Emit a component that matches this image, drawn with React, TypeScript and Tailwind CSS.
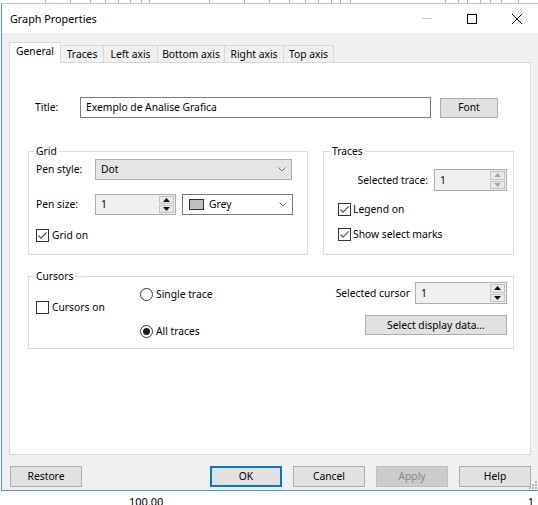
import type { ReactNode } from "react";

const ticks = [45, 70, 90, 105, 118, 130, 141, 149, 209, 244, 269, 289, 305, 318, 331, 340, 350, 445, 458, 467, 480, 490, 501, 518];

const tabs = [
  { label: "General", w: "w-[52px]" },
  { label: "Traces", w: "w-[43px]" },
  { label: "Left axis", w: "w-[54px]" },
  { label: "Bottom axis", w: "w-[67px]" },
  { label: "Right axis", w: "w-[59px]" },
  { label: "Top axis", w: "w-[50px]" },
];

function CheckBox({ checked }: { checked: boolean }) {
  return (
    <span className="flex h-[13px] w-[13px] shrink-0 items-center justify-center border border-[#333333] bg-white">
      {checked ? (
        <svg width="11" height="11" viewBox="0 0 11 11">
          <path d="M1.5 5.5 L4 8.2 L9.6 2.4" fill="none" stroke="#555555" strokeWidth="1.2" />
        </svg>
      ) : null}
    </span>
  );
}

function Radio({ on }: { on: boolean }) {
  return (
    <span className="flex h-[13px] w-[13px] shrink-0 items-center justify-center rounded-full border border-[#333333] bg-white">
      {on ? <span className="h-[7px] w-[7px] rounded-full bg-[#1a1a1a]" /> : null}
    </span>
  );
}

function Chevron() {
  return (
    <svg width="8" height="5" viewBox="0 0 8 5" className="shrink-0">
      <path d="M0.5 0.5 L4 4 L7.5 0.5" fill="none" stroke="#707070" strokeWidth="1" />
    </svg>
  );
}

function Arrow({ up, color }: { up: boolean; color: string }) {
  return (
    <svg width="7" height="4" viewBox="0 0 7 4">
      <polygon points={up ? "0,4 3.5,0 7,4" : "0,0 3.5,4 7,0"} fill={color} />
    </svg>
  );
}

function Spin({ className, dim }: { className: string; dim?: boolean }) {
  const color = dim ? "#a6a6a6" : "#111111";
  return (
    <div className={`flex border border-[#adadad] bg-[#f0f0f0] ${className}`}>
      <span className="flex flex-1 items-center pl-[5px]">1</span>
      <div className="flex w-[17px] flex-col gap-px p-px">
        <span className="flex flex-1 items-center justify-center border border-[#c2c2c2] bg-[#e9e9e9]">
          <Arrow up color={color} />
        </span>
        <span className="flex flex-1 items-center justify-center border border-[#c2c2c2] bg-[#e9e9e9]">
          <Arrow up={false} color={color} />
        </span>
      </div>
    </div>
  );
}

function Button({ children, className }: { children: ReactNode; className: string }) {
  return (
    <div className={`flex items-center justify-center border ${className}`}>{children}</div>
  );
}

export default function App() {
  return (
    <div className="h-[505px] w-[538px] overflow-hidden bg-white font-['Noto_Sans',sans-serif] text-[10.3px] leading-[13px] text-black">
      <svg width="538" height="3" className="block">
        {ticks.map((x) => (
          <line key={x} x1={x + 0.5} y1="0" x2={x + 0.5} y2="3" stroke="#b4b4b4" />
        ))}
      </svg>

      <div className="relative ml-px flex h-[488px] flex-col border-t border-b border-l border-t-[#a9c8ea] border-b-[#4f94d4] border-l-[#4f94d4]">
        <div className="flex h-[29px] shrink-0 items-center bg-white pl-[8px] pr-[16px]">
          <span className="text-[10.8px]">Graph Properties</span>
          <div className="ml-auto flex items-center gap-[35px]">
            <span className="h-px w-[10px] bg-[#c8c8c8]" />
            <span className="h-[10px] w-[10px] border border-black" />
            <svg width="10" height="10" viewBox="0 0 10 10">
              <path d="M0 0 L10 10 M10 0 L0 10" stroke="#000" strokeWidth="1" />
            </svg>
          </div>
        </div>

        <div className="flex flex-1 flex-col bg-[#f0f0f0] px-[7px] pt-[9px]">
          <div className="relative z-10 flex h-[20px] items-end">
            {tabs.map((t, i) =>
              i === 0 ? (
                <div
                  key={t.label}
                  className={`-mb-px flex h-[21px] items-start justify-center border border-b-0 border-[#d9d9d9] bg-white pt-[2px] ${t.w}`}
                >
                  {t.label}
                </div>
              ) : (
                <div
                  key={t.label}
                  className={`flex h-[17px] items-center justify-center border-t border-r border-[#d9d9d9] bg-[#f0f0f0] ${t.w}`}
                >
                  {t.label}
                </div>
              )
            )}
          </div>

          <div className="h-[393px] border border-[#d9d9d9] bg-white">
            <div className="mt-[34px] flex h-[21px] items-center">
              <span className="ml-[25px] w-[45px]">Title:</span>
              <div className="flex h-[21px] w-[351px] items-center border border-[#7a7a7a] px-[5px]">
                Exemplo de Analise Grafica
              </div>
              <Button className="ml-[9px] h-[20px] w-[58px] border-[#adadad] bg-[#e1e1e1]">Font</Button>
            </div>

            <div className="mt-[26px] flex gap-[15px] pl-[18px]">
              <fieldset className="m-0 h-[111px] w-[280px] min-w-0 border border-[#dcdcdc] p-0">
                <legend className="ml-[5px] px-[2px] leading-[14px]">Grid</legend>
                <div className="pl-[7px] pt-px">
                  <div className="flex h-[21px] items-center">
                    <span className="w-[59px]">Pen style:</span>
                    <div className="flex h-[21px] w-[197px] items-center border border-[#adadad] bg-[#e5e5e5] pl-[5px] pr-[5px]">
                      <span className="flex-1">Dot</span>
                      <Chevron />
                    </div>
                  </div>
                  <div className="mt-[14px] flex h-[21px] items-center">
                    <span className="w-[59px]">Pen size:</span>
                    <Spin className="h-[21px] w-[81px]" />
                    <div className="ml-[6px] flex h-[21px] w-[111px] items-center border border-[#7a7a7a] bg-white pl-[6px] pr-[5px]">
                      <span className="h-[11px] w-[15px] border border-[#333333] bg-[#c0c0c0]" />
                      <span className="ml-[5px] flex-1">Grey</span>
                      <Chevron />
                    </div>
                  </div>
                  <div className="mt-[14px] flex h-[13px] items-center gap-[3px]">
                    <CheckBox checked />
                    <span>Grid on</span>
                  </div>
                </div>
              </fieldset>

              <fieldset className="m-0 h-[111px] w-[191px] min-w-0 border border-[#dcdcdc] p-0">
                <legend className="ml-[6px] px-[2px] leading-[14px]">Traces</legend>
                <div className="pt-[11px]">
                  <div className="flex items-center justify-end pr-[6px]">
                    <span>Selected trace:</span>
                    <Spin className="ml-[6px] h-[22px] w-[73px]" dim />
                  </div>
                  <div className="mt-[12px] flex h-[13px] items-center gap-[2px] pl-[14px]">
                    <CheckBox checked />
                    <span>Legend on</span>
                  </div>
                  <div className="mt-[12px] flex h-[13px] items-center gap-[2px] pl-[14px]">
                    <CheckBox checked />
                    <span>Show select marks</span>
                  </div>
                </div>
              </fieldset>
            </div>

            <fieldset className="m-0 ml-[18px] mt-[14px] h-[80px] w-[486px] min-w-0 border border-[#dcdcdc] p-0">
              <legend className="ml-[5px] px-[2px] leading-[14px]">Cursors</legend>
              <div className="flex items-start">
                <div className="mt-[18px] flex h-[13px] w-[111px] items-center gap-[3px] pl-[7px]">
                  <CheckBox checked={false} />
                  <span>Cursors on</span>
                </div>
                <div className="flex flex-col">
                  <div className="mt-[5px] flex h-[13px] items-center gap-[3px]">
                    <Radio on={false} />
                    <span>Single trace</span>
                  </div>
                  <div className="mt-[24px] flex h-[13px] items-center gap-[3px]">
                    <Radio on />
                    <span>All traces</span>
                  </div>
                </div>
                <div className="-mt-px ml-auto flex flex-col items-end pr-[6px]">
                  <div className="flex items-center">
                    <span>Selected cursor</span>
                    <Spin className="ml-[5px] h-[22px] w-[92px]" />
                  </div>
                  <Button className="mt-[11px] h-[20px] w-[142px] border-[#adadad] bg-[#e1e1e1]">
                    Select display data...
                  </Button>
                </div>
              </div>
            </fieldset>
          </div>

          <div className="mt-[11px] flex h-[21px]">
            <Button className="ml-px w-[72px] border-[#adadad] bg-[#e1e1e1]">Restore</Button>
            <div className="ml-auto flex gap-[11px]">
              <Button className="w-[72px] border-2 border-[#0078d7] bg-[#e1e1e1]">OK</Button>
              <Button className="w-[72px] border-[#adadad] bg-[#e1e1e1]">Cancel</Button>
              <Button className="w-[72px] border-[#bfbfbf] bg-[#cccccc] text-[#8a8a8a]">Apply</Button>
              <Button className="w-[72px] border-[#adadad] bg-[#e1e1e1]">Help</Button>
            </div>
          </div>
        </div>

        <svg width="8" height="8" viewBox="0 0 8 8" className="absolute right-px bottom-px">
          <rect x="6" y="0" width="2" height="2" fill="#b9b9b9" />
          <rect x="3" y="3" width="2" height="2" fill="#b9b9b9" />
          <rect x="6" y="3" width="2" height="2" fill="#b9b9b9" />
          <rect x="0" y="6" width="2" height="2" fill="#b9b9b9" />
          <rect x="3" y="6" width="2" height="2" fill="#b9b9b9" />
          <rect x="6" y="6" width="2" height="2" fill="#b9b9b9" />
        </svg>
      </div>

      <div className="flex pl-[129px] pr-[4px] pt-[5px] text-[11px] leading-[12px]">
        <span>100.00</span>
        <span className="ml-auto">1</span>
      </div>
    </div>
  );
}
